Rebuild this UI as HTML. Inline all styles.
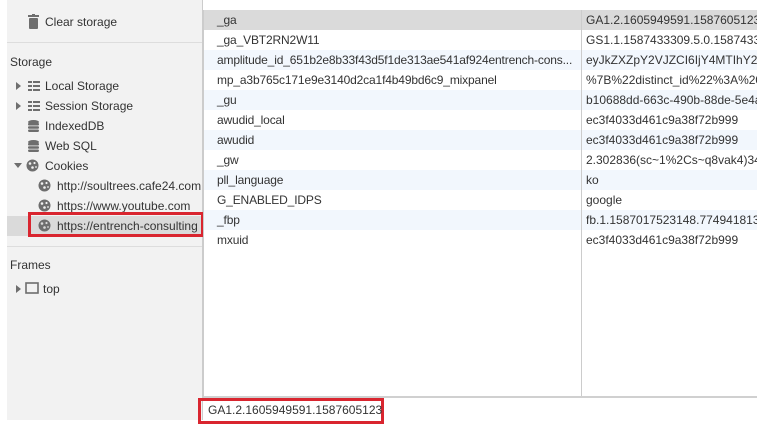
<!DOCTYPE html>
<html><head><meta charset="utf-8"><style>
*{margin:0;padding:0;box-sizing:border-box}
body{width:763px;height:433px;background:#fff;font-family:"Liberation Sans",sans-serif;font-size:12px;color:#333;position:relative;overflow:hidden}
.abs{position:absolute;white-space:nowrap}
#side{position:absolute;left:7px;top:0;width:196px;height:420px;background:#f2f2f2;border-right:1px solid #ccc}
.hr{position:absolute;left:7px;width:195px;height:1px;background:#ddd}
.tri{position:absolute;width:0;height:0;border-top:4px solid transparent;border-bottom:4px solid transparent;border-left:5px solid #6e6e6e}
.trid{position:absolute;width:0;height:0;border-left:4px solid transparent;border-right:4px solid transparent;border-top:5px solid #6e6e6e}
.row{position:absolute;left:204px;width:553px;height:20px;line-height:20px;white-space:nowrap}
.row span{position:absolute;left:13px;letter-spacing:-0.15px}
.row b{font-weight:normal;position:absolute;left:382px;width:171px;overflow:hidden;white-space:nowrap}
.blue{background:#f2f7fd}
</style></head><body>
<div id="side"></div>
<svg class="abs" style="left:28px;top:14px" width="11" height="15"><rect x="0" y="1" width="11" height="2" fill="#6e6e6e"/><rect x="4" y="0" width="3" height="2" fill="#6e6e6e"/><rect x="1" y="4" width="9" height="11" rx="1" fill="#6e6e6e"/></svg>
<div class="abs" style="left:45px;top:15px">Clear storage</div>
<div class="hr" style="top:42px"></div>
<div class="abs" style="left:10px;top:55px">Storage</div>
<div class="tri" style="left:16px;top:82px"></div>
<svg class="abs" style="left:28px;top:81px" width="12" height="10"><g fill="#6e6e6e"><rect x="0" y="0" width="4" height="2"/><rect x="5" y="0" width="7" height="2"/><rect x="0" y="4" width="4" height="2"/><rect x="5" y="4" width="7" height="2"/><rect x="0" y="8" width="4" height="2"/><rect x="5" y="8" width="7" height="2"/></g></svg>
<div class="abs" style="left:45px;top:79px">Local Storage</div>
<div class="tri" style="left:16px;top:102px"></div>
<svg class="abs" style="left:28px;top:101px" width="12" height="10"><g fill="#6e6e6e"><rect x="0" y="0" width="4" height="2"/><rect x="5" y="0" width="7" height="2"/><rect x="0" y="4" width="4" height="2"/><rect x="5" y="4" width="7" height="2"/><rect x="0" y="8" width="4" height="2"/><rect x="5" y="8" width="7" height="2"/></g></svg>
<div class="abs" style="left:45px;top:99px">Session Storage</div>
<svg class="abs" style="left:28px;top:120px" width="11" height="12"><g fill="#6e6e6e"><ellipse cx="5.5" cy="2" rx="5.5" ry="2"/><rect x="0" y="3" width="11" height="2.5" rx="1"/><rect x="0" y="6.3" width="11" height="2.5" rx="1"/><rect x="0" y="9.5" width="11" height="2.5" rx="1.2"/></g></svg>
<div class="abs" style="left:45px;top:119px">IndexedDB</div>
<svg class="abs" style="left:28px;top:140px" width="11" height="12"><g fill="#6e6e6e"><ellipse cx="5.5" cy="2" rx="5.5" ry="2"/><rect x="0" y="3" width="11" height="2.5" rx="1"/><rect x="0" y="6.3" width="11" height="2.5" rx="1"/><rect x="0" y="9.5" width="11" height="2.5" rx="1.2"/></g></svg>
<div class="abs" style="left:45px;top:139px">Web SQL</div>
<div class="trid" style="left:14px;top:163px"></div>
<svg class="abs" style="left:26px;top:159px" width="13" height="13"><circle cx="6.5" cy="6.5" r="6" fill="#6e6e6e"/><g fill="#f2f2f2"><circle cx="4" cy="4.5" r="1.3"/><circle cx="8.5" cy="4" r="1.1"/><circle cx="6.5" cy="8.5" r="1.3"/><circle cx="10" cy="8" r="0.9"/></g></svg>
<div class="abs" style="left:45px;top:159px">Cookies</div>
<div class="abs" style="left:7px;top:216px;width:195px;height:20px;background:#dadada"></div>
<svg class="abs" style="left:38px;top:179px" width="13" height="13"><circle cx="6.5" cy="6.5" r="6" fill="#6e6e6e"/><g fill="#f2f2f2"><circle cx="4" cy="4.5" r="1.3"/><circle cx="8.5" cy="4" r="1.1"/><circle cx="6.5" cy="8.5" r="1.3"/><circle cx="10" cy="8" r="0.9"/></g></svg>
<div class="abs" style="left:57px;top:179px;width:145px;overflow:hidden">http://soultrees.cafe24.com</div>
<svg class="abs" style="left:38px;top:199px" width="13" height="13"><circle cx="6.5" cy="6.5" r="6" fill="#6e6e6e"/><g fill="#f2f2f2"><circle cx="4" cy="4.5" r="1.3"/><circle cx="8.5" cy="4" r="1.1"/><circle cx="6.5" cy="8.5" r="1.3"/><circle cx="10" cy="8" r="0.9"/></g></svg>
<div class="abs" style="left:57px;top:199px">https://www.youtube.com</div>
<svg class="abs" style="left:38px;top:219px" width="13" height="13"><circle cx="6.5" cy="6.5" r="6" fill="#6e6e6e"/><g fill="#dadada"><circle cx="4" cy="4.5" r="1.3"/><circle cx="8.5" cy="4" r="1.1"/><circle cx="6.5" cy="8.5" r="1.3"/><circle cx="10" cy="8" r="0.9"/></g></svg>
<div class="abs" style="left:57px;top:219px;width:145px;overflow:hidden">https://entrench-consulting</div>
<div class="abs" style="left:28px;top:212px;width:176px;height:25px;border:3px solid #d9252f"></div>
<div class="hr" style="top:246px"></div>
<div class="abs" style="left:10px;top:258px">Frames</div>
<div class="tri" style="left:16px;top:285px"></div>
<svg class="abs" style="left:25px;top:282px" width="14" height="12"><rect x="1" y="1" width="12" height="10" fill="none" stroke="#6e6e6e" stroke-width="1.6"/></svg>
<div class="abs" style="left:43px;top:282px">top</div>

<div class="abs" style="left:203px;top:10px;width:1px;height:388px;background:#ccc"></div>
<div class="row" style="top:10px;background:#dadada"><span>_ga</span><b>GA1.2.1605949591.1587605123</b></div>
<div class="row" style="top:30px"><span>_ga_VBT2RN2W11</span><b>GS1.1.1587433309.5.0.1587433309</b></div>
<div class="row blue" style="top:50px"><span>amplitude_id_651b2e8b33f43d5f1de313ae541af924entrench-cons...</span><b>eyJkZXZpY2VJZCI6IjY4MTIhY2RiM</b></div>
<div class="row" style="top:70px"><span>mp_a3b765c171e9e3140d2ca1f4b49bd6c9_mixpanel</span><b>%7B%22distinct_id%22%3A%20%</b></div>
<div class="row blue" style="top:90px"><span>_gu</span><b>b10688dd-663c-490b-88de-5e4a</b></div>
<div class="row" style="top:110px"><span>awudid_local</span><b>ec3f4033d461c9a38f72b999</b></div>
<div class="row blue" style="top:130px"><span>awudid</span><b>ec3f4033d461c9a38f72b999</b></div>
<div class="row" style="top:150px"><span>_gw</span><b>2.302836(sc~1%2Cs~q8vak4)347</b></div>
<div class="row blue" style="top:170px"><span>pll_language</span><b>ko</b></div>
<div class="row" style="top:190px"><span>G_ENABLED_IDPS</span><b>google</b></div>
<div class="row blue" style="top:210px"><span>_fbp</span><b>fb.1.1587017523148.774941813</b></div>
<div class="row" style="top:230px"><span>mxuid</span><b>ec3f4033d461c9a38f72b999</b></div>
<div class="abs" style="left:581px;top:10px;width:1px;height:387px;background:#ccc"></div>
<div class="abs" style="left:204px;top:396px;width:553px;height:2px;background:#d0d0d0"></div>
<div class="abs" style="left:198px;top:398px;width:186px;height:26px;border:3px solid #d9252f"></div>
<div class="abs" style="left:208px;top:403px">GA1.2.1605949591.1587605123</div>
</body></html>
